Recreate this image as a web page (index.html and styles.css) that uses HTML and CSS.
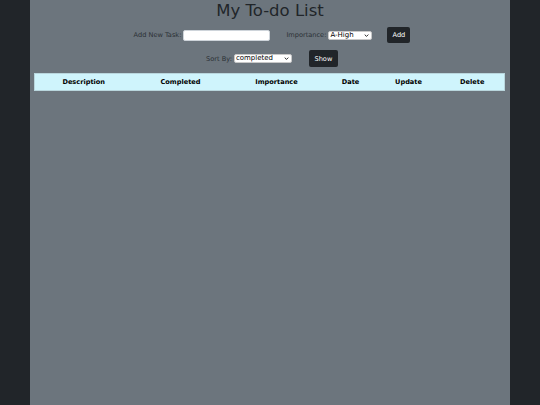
FILE: index.html
```html
<!DOCTYPE html>
<html>
<head>
<meta charset="utf-8">
<link rel="stylesheet" href="styles.css">
</head>
<body>
<div class="page">
  <h1 class="title">My To-do List</h1>
  <form class="row row-add">
    <label class="lbl" for="task">Add New Task:</label>
    <input class="task-input" id="task" type="text">
    <label class="lbl lbl-imp" for="imp">Importance:</label>
    <span class="sel-wrap sel-imp">
      <select class="sel" id="imp">
        <option>A-High</option>
        <option>B-Medium</option>
        <option>C-Low</option>
      </select>
      <svg class="chev" viewBox="0 0 8 5" width="5" height="3"><polyline points="1,1 4,4 7,1" fill="none" stroke="#222" stroke-width="1.6"/></svg>
    </span>
    <button class="btn btn-add" type="button">Add</button>
  </form>
  <form class="row row-sort">
    <label class="lbl" for="sort">Sort By:</label>
    <span class="sel-wrap sel-sort">
      <select class="sel" id="sort">
        <option>completed</option>
        <option>importance</option>
        <option>date</option>
      </select>
      <svg class="chev" viewBox="0 0 8 5" width="5" height="3"><polyline points="1,1 4,4 7,1" fill="none" stroke="#222" stroke-width="1.6"/></svg>
    </span>
    <button class="btn btn-show" type="button">Show</button>
  </form>
  <table class="tasks">
    <colgroup>
      <col class="c1"><col class="c2"><col class="c3"><col class="c4"><col class="c5"><col class="c6">
    </colgroup>
    <thead>
      <tr>
        <th>Description</th>
        <th>Completed</th>
        <th>Importance</th>
        <th>Date</th>
        <th>Update</th>
        <th>Delete</th>
      </tr>
    </thead>
    <tbody></tbody>
  </table>
</div>
</body>
</html>
```

FILE: styles.css
```css
html, body {
  margin: 0;
  padding: 0;
}
body {
  background: #212529;
  font-family: "DejaVu Sans", sans-serif;
  color: #212529;
}
.page {
  width: 480px;
  min-height: 405px;
  margin: 0 auto;
  background: #6c757d;
  box-sizing: border-box;
  padding-top: 0;
}
.title {
  margin: 0;
  font-size: 16.5px;
  line-height: 21px;
  font-weight: normal;
  text-align: center;
  color: #212529;
}
.row {
  display: flex;
  align-items: center;
  justify-content: center;
  margin: 0;
  padding-left: 4px;
}
.row-add {
  margin-top: 6px;
  height: 16px;
}
.row-sort {
  margin-top: 7px;
  height: 17px;
}
.lbl {
  font-size: 6.6px;
  color: #2b3035;
  margin-right: 2px;
}
.lbl-imp {
  margin-left: 16px;
  margin-right: 2px;
}
.task-input {
  width: 87px;
  height: 11px;
  box-sizing: border-box;
  border: 1px solid #ced4da;
  border-radius: 2px;
  background: #fff;
  padding: 0 2px;
  font-size: 6.5px;
  margin: 0;
}
.sel-wrap {
  position: relative;
  display: block;
  height: 9px;
}
.sel {
  display: block;
  width: 100%;
  height: 9px;
  box-sizing: border-box;
  -webkit-appearance: none;
  appearance: none;
  font-family: "DejaVu Sans", sans-serif;
  font-size: 7px;
  line-height: 7px;
  padding: 0 0 0 1px;
  margin: 0;
  border: 1px solid #c8c8c8;
  border-radius: 2px;
  background: #fff;
  color: #000;
}
.chev {
  position: absolute;
  right: 3px;
  top: 3px;
  pointer-events: none;
}
.sel-imp {
  width: 44px;
}
.sel-sort {
  width: 58px;
}
.btn {
  background: #212529;
  color: #fff;
  border: none;
  border-radius: 2px;
  font-family: "DejaVu Sans", sans-serif;
  font-size: 6.6px;
  padding: 0;
  margin: 0;
}
.btn-add {
  width: 23px;
  height: 16px;
  margin-left: 15px;
}
.btn-show {
  width: 29px;
  height: 17px;
  margin-left: 17px;
}
.tasks {
  margin: 6px 0 0 4px;
  width: 471px;
  border-collapse: collapse;
  table-layout: fixed;
  background: #cff4fc;
  border: 1px solid #b9d6dd;
}
.tasks th {
  height: 16px;
  padding: 0;
  font-size: 6.6px;
  font-weight: bold;
  color: #000;
  text-align: center;
  vertical-align: middle;
}
.c1 { width: 98px; }
.c2 { width: 96px; }
.c3 { width: 96px; }
.c4 { width: 52px; }
.c5 { width: 64px; }
.c6 { width: 64px; }
```
